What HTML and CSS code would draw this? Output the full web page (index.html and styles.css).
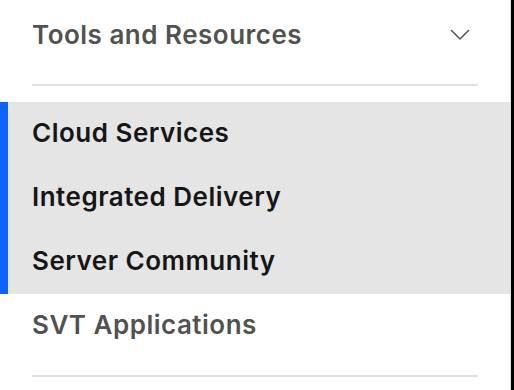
FILE: index.html
```html
<!DOCTYPE html>
<html lang="en">
<head>
    <meta charset="UTF-8">
    <meta name="viewport" content="width=device-width, initial-scale=1.0">
    <title>Tools and Resources</title>
    <link rel="stylesheet" href="styles.css">
</head>
<body>

    <nav class="side-nav">
        <!-- Encabezado del grupo -->
        <div class="nav-header">
            <span class="nav-title">Tools and Resources</span>
            <svg class="chevron" width="20" height="12" viewBox="0 0 20 12">
                <polyline points="1,1 10,10 19,1" fill="none" stroke="#525252" stroke-width="1.5"/>
            </svg>
        </div>
        <div class="divider"></div>

        <ul class="nav-list">
            <li class="nav-item active">Cloud Services</li>
            <li class="nav-item active">Integrated Delivery</li>
            <li class="nav-item active">Server Community</li>
            <li class="nav-item">SVT Applications</li>
        </ul>
        <div class="divider bottom"></div>
    </nav>

</body>
</html>
```

FILE: styles.css
```css
body {
    margin: 0;
    padding: 0;
    background: #000;
    font-family: 'Inter', 'Noto Sans', sans-serif;
}

.side-nav {
    width: 510px;
    height: 390px;
    background: #fff;
    border-right: 1px solid #e0e0e0;
    overflow: hidden;
}

.nav-header {
    display: flex;
    align-items: center;
    justify-content: space-between;
    height: 70px;
    padding: 0 40px 0 32px;
}

.nav-title {
    font-size: 26px;
    font-weight: 600;
    letter-spacing: 0.5px;
    color: #525252;
    padding-bottom: 2px;
}

.chevron {
    display: block;
}

.divider {
    height: 2px;
    margin: 14px 32px 0 32px;
    background: #e0e0e0;
}

.divider.bottom {
    margin-top: 17px;
}

.nav-list {
    list-style: none;
    margin: 16px 0 0 0;
    padding: 0;
}

.nav-item {
    display: flex;
    align-items: center;
    height: 61px;
    padding: 0 0 3px 32px;
    font-size: 26px;
    font-weight: 600;
    letter-spacing: 0.5px;
    color: #525252;
}

.nav-item.active {
    background: #e5e5e5;
    color: #161616;
    box-shadow: inset 8px 0 0 #0f62fe;
    margin-right: -1px;
}
```
